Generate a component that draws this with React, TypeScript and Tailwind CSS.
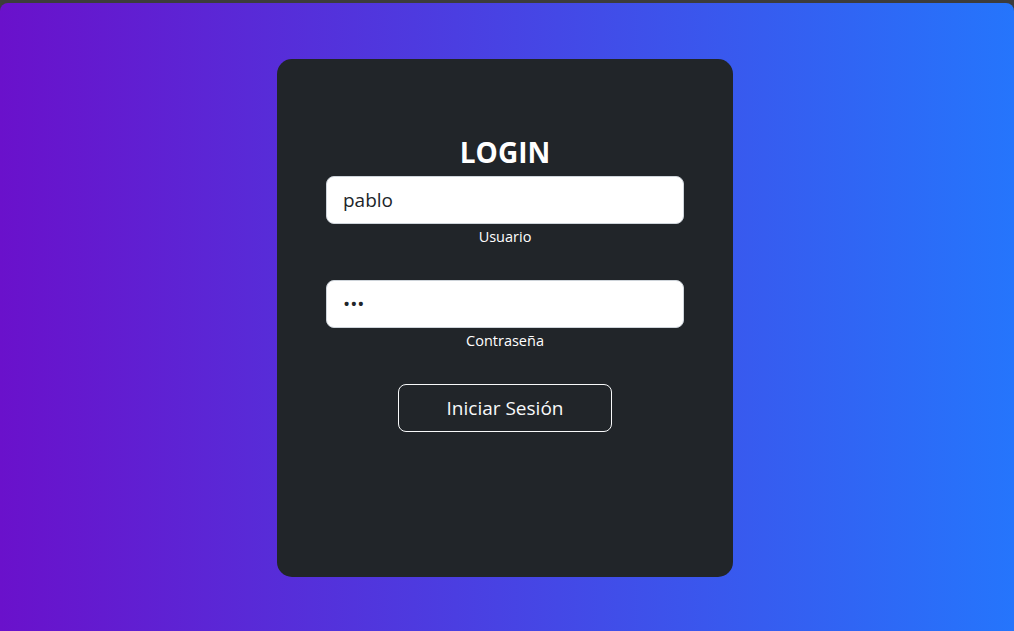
export default function App() {
  return (
    <div className="w-[1014px] h-[631px] bg-[#3c3c3c] pt-[3px] overflow-hidden" style={{ fontFamily: '"Open Sans", "Noto Sans", sans-serif' }}>
      <div className="h-[628px] rounded-t-lg bg-[linear-gradient(to_right,#6a11cb,#2575fc)] flex justify-center pt-[56px] pr-[4px]">
        <div className="w-[456px] h-[518px] rounded-[15px] bg-[#212529] px-[49px] pt-[76px] flex flex-col items-center">
          <h2 className="text-[28px] leading-[34px] font-bold text-white mb-[7px]">LOGIN</h2>
          <input
            type="text"
            defaultValue="pablo"
            className="w-full h-[48px] rounded-lg border border-[#ced4da] bg-white px-4 text-[19px] text-[#212529] outline-none"
          />
          <span className="text-[14.5px] leading-[24px] text-white mt-[1px]">Usuario</span>
          <input
            type="password"
            defaultValue="abc"
            className="w-full h-[48px] rounded-lg border border-[#ced4da] bg-white px-4 text-[19px] text-[#212529] outline-none mt-[31px]"
          />
          <span className="text-[14.5px] leading-[24px] text-white mt-[1px]">Contraseña</span>
          <button className="mt-[31px] w-[214px] h-[48px] rounded-lg border border-[#f8f9fa] text-[19px] text-[#f8f9fa]">
            Iniciar Sesión
          </button>
        </div>
      </div>
    </div>
  );
}
